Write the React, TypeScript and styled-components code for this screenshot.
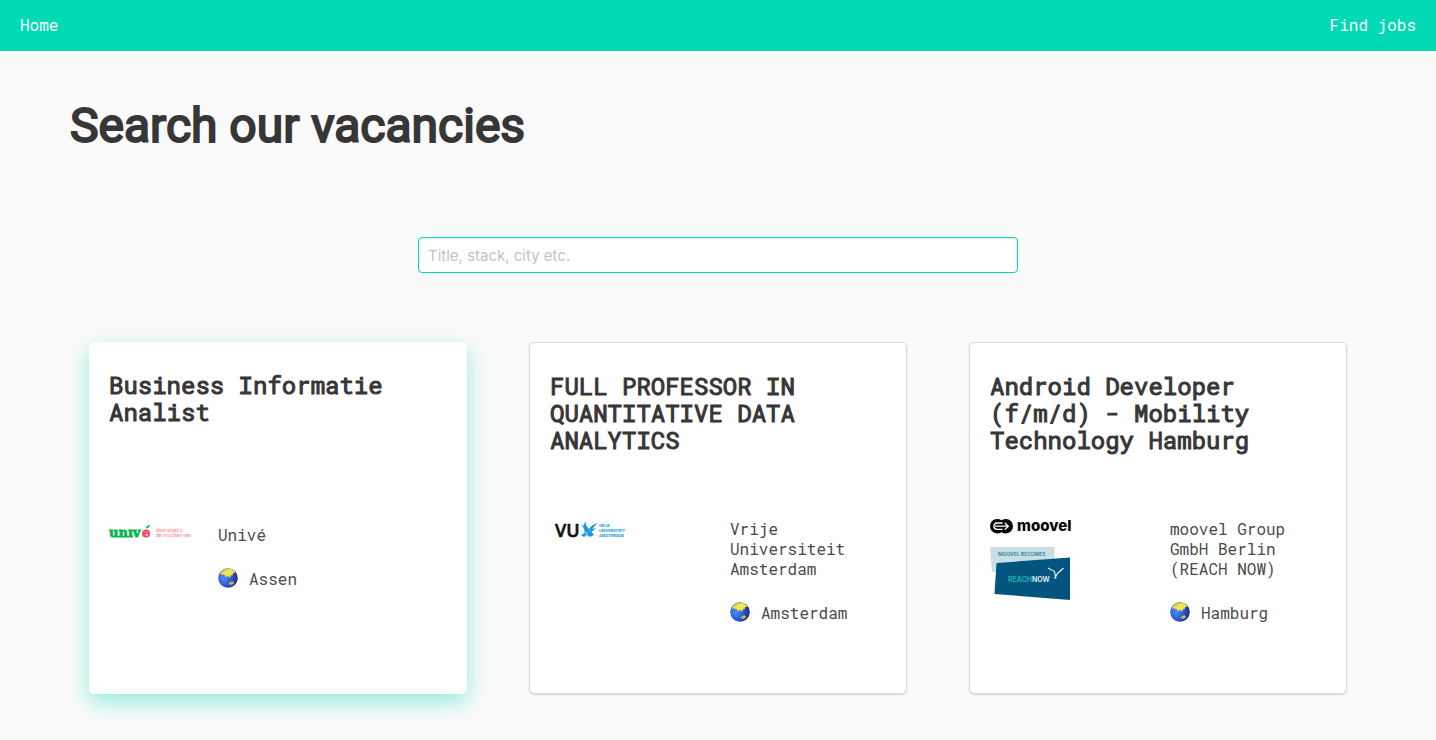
import React from 'react';
import styled, { createGlobalStyle } from 'styled-components';

const mono = '"Roboto Mono", "DejaVu Sans Mono", "Liberation Mono", monospace';
const sans = 'Roboto, "Liberation Sans", sans-serif';

const GlobalStyle = createGlobalStyle`
  *, *::before, *::after { box-sizing: border-box; }
  body {
    margin: 0;
    background: #fafafa;
    color: #4a4a4a;
    font-family: ${mono};
    font-size: 16px;
  }
  h1, h2, p { margin: 0; }
`;

const NavBar = styled.nav`
  display: flex;
  align-items: center;
  justify-content: space-between;
  min-height: 51px;
  padding: 0 20px 2px;
  background: #00d9b5;
`;

const NavLink = styled.a`
  color: #fff;
  line-height: 24px;
  text-decoration: none;
`;

const Heading = styled.h1`
  padding: 48px 70px 0;
  color: #363636;
  font-family: ${sans};
  font-size: 48px;
  font-weight: 400;
  line-height: 54px;
  -webkit-text-stroke: 2px #363636;
`;

const SearchForm = styled.form`
  display: flex;
  justify-content: center;
  padding: 84px 20px 69px;
`;

const SearchInput = styled.input`
  width: 100%;
  max-width: 600px;
  height: 36px;
  padding: 0 9px;
  border: 1px solid #00d9b5;
  border-radius: 4px;
  background: #fff;
  box-shadow: inset 0 1px 2px rgba(10, 10, 10, 0.1);
  color: #363636;
  font-family: Inter, ${sans};
  font-size: 15px;
  outline: none;
  &::placeholder { color: #c3c3c3; opacity: 1; }
`;

const JobGrid = styled.section`
  display: grid;
  grid-template-columns: repeat(3, minmax(0, 1fr));
  gap: 62px;
  padding: 0 89px 46px;
`;

const JobCard = styled.article<{ $raised?: boolean }>`
  display: flex;
  flex-direction: column;
  min-height: 352px;
  padding: 30px 20px 5px;
  border: ${({ $raised }) => ($raised ? '0' : '1px solid #dbdbdb')};
  border-radius: 5px;
  background: #fff;
  box-shadow: ${({ $raised }) =>
    $raised ? '0 8px 22px rgba(0, 217, 181, 0.42)' : '0 1px 2px rgba(10, 10, 10, 0.14)'};
`;

const JobTitle = styled.h2`
  color: #363636;
  font-size: 24px;
  font-weight: 400;
  line-height: 27px;
  -webkit-text-stroke: 1px #363636;
`;

const JobBody = styled.div`
  flex: 1;
  display: flex;
  align-items: center;
`;

const JobRow = styled.div<{ $logoColumn: number }>`
  flex: 1;
  display: grid;
  grid-template-columns: ${({ $logoColumn }) => $logoColumn}px minmax(0, 1fr);
  align-items: start;
`;

const JobInfo = styled.div`
  display: grid;
  gap: 23px;
  line-height: 20px;
`;

const City = styled.p`
  display: flex;
  align-items: center;
  gap: 11px;
`;

const Logo = styled.svg`
  display: block;
  overflow: visible;
`;

const GlobeIcon = styled.svg`
  display: block;
  margin-bottom: 2px;
`;

const Globe = ({ id }: { id: string }) => (
  <GlobeIcon width="20" height="20" viewBox="0 0 20 20" aria-hidden="true">
    <defs>
      <radialGradient id={`sea-${id}`} cx="30%" cy="50%" r="70%">
        <stop offset="0" stopColor="#4a90f4" />
        <stop offset="0.55" stopColor="#2b5ad2" />
        <stop offset="1" stopColor="#1c2c88" />
      </radialGradient>
      <linearGradient id={`land-${id}`} x1="0" y1="0" x2="1" y2="1">
        <stop offset="0" stopColor="#7f9c4e" />
        <stop offset="0.4" stopColor="#f5e955" />
        <stop offset="0.75" stopColor="#e8d84c" />
        <stop offset="1" stopColor="#8b8c35" />
      </linearGradient>
    </defs>
    <circle cx="10" cy="10" r="9.800" fill={`url(#sea-${id})`} />
    <path d="M2.800 4Q5.500 .8 10 .5Q14.500.8 17.200 4L16.800 5.200L15.300 4.700L14.500 7.400L13 7.200L12.600 9.400L11.700 8.500L11.300 10.200L10.300 8.300L9 8L8.300 9.700L7.200 7.800L5.800 6.600L4.600 7.100L3.700 5.900L1.700 7Z" fill={`url(#land-${id})`} />
    <path d="M10.800 15.500L12.400 14.100L14.300 13.300L16 14.500L15.300 16.100L13.500 16.800L11.300 16.500Z" fill="#e0b43c" />
  </GlobeIcon>
);

const UniveLogo = () => (
  <Logo width="80" height="14" viewBox="0 0 80 14" role="img" aria-label="Univé">
    <g fontFamily="DejaVu Serif, serif" fontWeight="700" fontSize="13" strokeWidth=".8">
      <text x="0" y="12" fill="#05b74f" stroke="#05b74f">unıv</text>
      <text x="33" y="12" fill="#ff4758" stroke="#ff4758">e</text>
    </g>
    <path d="M36.800 3.300L38.500.4L41.500 0L38.800 3.300Z" fill="#05b74f" />
    <g fill="#ff7c87" fontFamily="Roboto, sans-serif" fontSize="5">
      <text x="47" y="7">door plukt ú</text>
      <text x="47" y="12">de vruchten van</text>
    </g>
  </Logo>
);

const VuLogo = () => (
  <Logo width="80" height="20" viewBox="0 0 80 20" role="img" aria-label="Vrije Universiteit Amsterdam">
    <text x="5" y="18" fontFamily="Open Sans, sans-serif" fontWeight="600" fontSize="18" fill="#101010" stroke="#101010" strokeWidth=".6">VU</text>
    <path d="M31 4L34.500 11L34.500 14L31 16L34 18L37 16L40 18L44 16L41.500 13L46 9L42 10L47.500 4Q42 5.500 38.700 10L36 6L35.500 2L33.500 7Z" fill="#1598dc" />
    <path d="M34 13l4 1-3 2M39 11l2 1" stroke="#a8dbf5" strokeWidth=".8" fill="none" />
    <g fill="#1598dc" fontFamily="Roboto, sans-serif" fontWeight="700" fontSize="4">
      <text x="49" y="8">VRIJE</text>
      <text x="49" y="13">UNIVERSITEIT</text>
      <text x="49" y="18">AMSTERDAM</text>
    </g>
  </Logo>
);

const MoovelLogo = () => (
  <Logo width="80" height="81" viewBox="0 0 80 81" role="img" aria-label="moovel becomes Reach Now">
    <path d="M7 0Q9.700 0 11.500 1.200Q13.500 0 16 0A7 7.200 0 0 1 16 14.400Q13.500 14.400 11.500 13.200Q9.700 14.400 7 14.400A7 7.200 0 0 1 7 0Z" fill="#050505" />
    <path d="M5 7.200H18M14.800 3.800L18.300 7.200L14.800 10.600M12.500 4H7.200Q3.900 4.300 3.900 7.200T7.200 10.400H12.500" fill="none" stroke="#fff" strokeWidth="1.300" />
    <text x="27" y="12" fontFamily="Inter, sans-serif" fontWeight="800" fontSize="15" fill="#050505">moovel</text>
    <path d="M0 28L64.500 28V43L2 53Z" fill="#c7dfe5" />
    <path d="M6.500 44L80 38.500V81L4.500 75Z" fill="#03557f" />
    <text x="8" y="37" fontFamily="Inter, sans-serif" fontWeight="600" fontSize="5" fill="#347d99">MOOVEL BECOMES</text>
    <text x="18" y="63" fontFamily="Inter, sans-serif" fontWeight="600" fontSize="7" fill="#20b9ae">REACH<tspan fill="#e6f5fa">NOW</tspan></text>
    <path d="M57.800 49L64.300 52.300L66 59.500M64.500 59.500L67.500 54.500L73.500 49" fill="none" stroke="#d7edf3" strokeWidth="1.200" />
  </Logo>
);

const jobs = [
  { id: 'unive', title: 'Business Informatie Analist', company: 'Univé', city: 'Assen', logo: <UniveLogo />, logoColumn: 109, raised: true },
  { id: 'vu', title: 'FULL PROFESSOR IN QUANTITATIVE DATA ANALYTICS', company: 'Vrije Universiteit Amsterdam', city: 'Amsterdam', logo: <VuLogo />, logoColumn: 180 },
  { id: 'moovel', title: 'Android Developer (f/m/d) - Mobility Technology Hamburg', company: 'moovel Group GmbH Berlin (REACH NOW)', city: 'Hamburg', logo: <MoovelLogo />, logoColumn: 180 },
];

export default function App() {
  return (
    <>
      <GlobalStyle />
      <NavBar>
        <NavLink href="#home">Home</NavLink>
        <NavLink href="#jobs">Find jobs</NavLink>
      </NavBar>
      <main>
        <Heading>Search our vacancies</Heading>
        <SearchForm role="search">
          <SearchInput type="text" aria-label="Search vacancies" placeholder="Title, stack, city etc." />
        </SearchForm>
        <JobGrid id="jobs">
          {jobs.map((job) => (
            <JobCard key={job.id} $raised={job.raised}>
              <JobTitle>{job.title}</JobTitle>
              <JobBody>
                <JobRow $logoColumn={job.logoColumn}>
                  {job.logo}
                  <JobInfo>
                    <p>{job.company}</p>
                    <City><Globe id={job.id} />{job.city}</City>
                  </JobInfo>
                </JobRow>
              </JobBody>
            </JobCard>
          ))}
        </JobGrid>
      </main>
    </>
  );
}
